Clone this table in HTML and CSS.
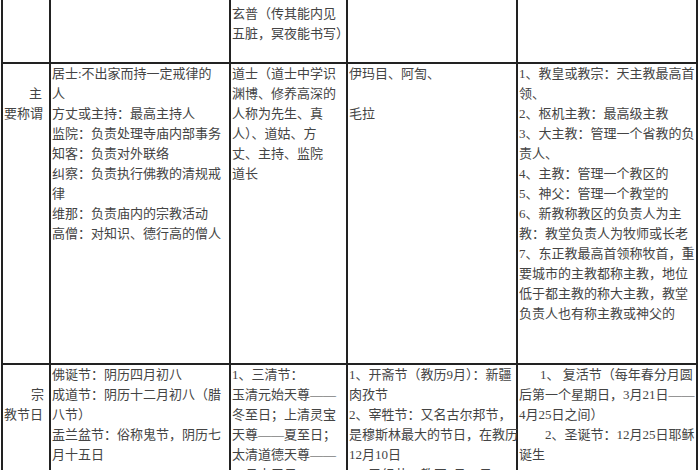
FILE: index.html
```html
<!DOCTYPE html>
<html lang="zh">
<head>
<meta charset="utf-8">
<title>宗教对比表</title>
<link rel="stylesheet" href="styles.css">
</head>
<body>
<div class="table">
  <div class="cell"></div>
  <div class="cell"></div>
  <div class="cell top">玄普（传其能内见<br>五脏，冥夜能书写）</div>
  <div class="cell"></div>
  <div class="cell"></div>

  <div class="cell head"><span class="ind">主</span><br>要称谓</div>
  <div class="cell">居士:不出家而持一定戒律的<br>人<br>方丈或主持：最高主持人<br>监院：负责处理寺庙内部事务<br>知客：负责对外联络<br>纠察：负责执行佛教的清规戒<br>律<br>维那：负责庙内的宗教活动<br>高僧：对知识、德行高的僧人</div>
  <div class="cell">道士（道士中学识<br>渊博、修养高深的<br>人称为先生、真<br>人）、道姑、方<br>丈、主持、监院<br>道长</div>
  <div class="cell">伊玛目、阿訇、<br><br>毛拉</div>
  <div class="cell">1、教皇或教宗：天主教最高首<br>领、<br>2、枢机主教：最高级主教<br>3、大主教：管理一个省教的负<br>责人、<br>4、主教：管理一个教区的<br>5、神父：管理一个教堂的<br>6、新教称教区的负责人为主<br>教：教堂负责人为牧师或长老<br>7、东正教最高首领称牧首，重<br>要城市的主教都称主教，地位<br>低于都主教的称大主教，教堂<br>负责人也有称主教或神父的</div>

  <div class="cell head"><span class="ind2">宗</span><br>教节日</div>
  <div class="cell">佛诞节：阴历四月初八<br>成道节：阴历十二月初八（腊<br>八节）<br>盂兰盆节：俗称鬼节，阴历七<br>月十五日</div>
  <div class="cell">1、三清节：<br>玉清元始天尊——<br>冬至日；上清灵宝<br>天尊——夏至日；<br>太清道德天尊——<br>二月十五日；</div>
  <div class="cell">1、开斋节（教历9月）：新疆<br>肉孜节<br>2、宰牲节：又名古尔邦节，<br>是穆斯林最大的节日，在教历<br>12月10日<br>3、圣纪节：教历3月12日</div>
  <div class="cell"><span class="ind3">1、 复活节（每年春分月圆</span><br>后第一个星期日，3月21日——<br>4月25日之间）<br><span class="ind4">2、圣诞节：12月25日耶稣</span><br>诞生</div>
</div>
</body>
</html>
```
FILE: styles.css
```css
html, body {
  margin: 0;
  padding: 0;
  background: #ffffff;
  overflow: hidden;
}

body {
  font-family: "Liberation Serif", "Noto Sans CJK SC", serif;
  font-size: 13px;
  line-height: 20px;
  color: #444444;
}

.table {
  display: grid;
  grid-template-columns: 48px 180px 117px 170px 180px;
  grid-template-rows: 64px 301px 200px;
  width: max-content;
  margin-left: 1px;
  border-left: 2px solid #222222;
}

.cell {
  box-sizing: border-box;
  border-right: 2px solid #222222;
  border-bottom: 2px solid #222222;
  padding-left: 1px;
  white-space: nowrap;
  overflow: visible;
}

.top {
  padding-top: 4px;
}

.head {
  padding-top: 20px;
}

.ind {
  padding-left: 25px;
}

.ind2 {
  padding-left: 27px;
}

.ind3 {
  padding-left: 21px;
}

.ind4 {
  padding-left: 26px;
}
```
